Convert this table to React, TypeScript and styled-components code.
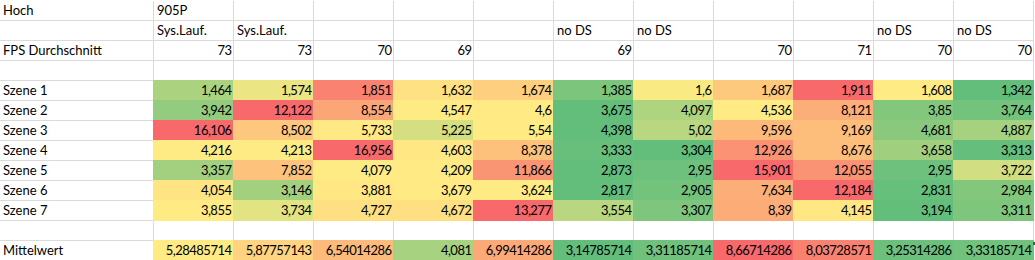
import React from "react";
import styled, { createGlobalStyle } from "styled-components";

const GlobalStyle = createGlobalStyle`
  html, body { margin: 0; padding: 0; background: #ffffff; }
  body { font-family: "Lato", "Liberation Sans", sans-serif; color: #000; }
`;

const GRID = "#dadada";

const Sheet = styled.div`
  position: relative;
  display: grid;
  grid-template-columns: 154px repeat(11, 80px);
  grid-auto-rows: 20px;
  margin-top: 1px;
  width: 1034px;
`;

const Cell = styled.div<{ $numeric?: boolean; $bg?: string }>`
  box-sizing: border-box;
  display: flex;
  align-items: flex-end;
  justify-content: ${(p) => (p.$numeric ? "flex-end" : "flex-start")};
  padding: 0 ${(p) => (p.$numeric ? "1.5px" : "2px")} 2px 3px;
  border-right: 1px solid ${(p) => p.$bg ?? GRID};
  border-bottom: 1px solid ${(p) => p.$bg ?? GRID};
  background: ${(p) => p.$bg ?? "#fff"};
  box-shadow: ${(p) =>
    p.$bg ? `-1px 0 0 0 ${p.$bg}, 0 -1px 0 0 ${p.$bg}, -1px -1px 0 0 ${p.$bg}` : "none"};
  font-size: 13px;
  line-height: 15px;
  letter-spacing: ${(p) => (p.$numeric ? "-0.5px" : "0")};
  white-space: nowrap;
  overflow: visible;
`;

const FillHandle = styled.div`
  position: absolute;
  right: -1px;
  top: 241px;
  width: 2px;
  height: 3px;
  background: #217346;
`;

const MIN = [0x63, 0xbe, 0x7b];
const MID = [0xff, 0xeb, 0x84];
const MAX = [0xf8, 0x69, 0x6b];

const mix = (a: number[], b: number[], t: number) =>
  `rgb(${a.map((v, i) => Math.round(v + (b[i] - v) * t)).join(",")})`;

function scale(values: number[]): string[] {
  const sorted = [...values].sort((x, y) => x - y);
  const n = sorted.length;
  const lo = sorted[0];
  const hi = sorted[n - 1];
  const rank = 0.5 * (n - 1);
  const f = Math.floor(rank);
  const mid = sorted[f] + (sorted[Math.min(f + 1, n - 1)] - sorted[f]) * (rank - f);
  return values.map((v) => {
    if (v <= mid) return mix(MIN, MID, mid === lo ? 1 : (v - lo) / (mid - lo));
    return mix(MID, MAX, hi === mid ? 0 : (v - mid) / (hi - mid));
  });
}

const EMPTY11 = Array(11).fill("");

type Row = { label: string; cells: string[]; colored?: boolean; numeric?: boolean };

const rows: Row[] = [
  { label: "Hoch", cells: ["905P", "", "", "", "", "", "", "", "", "", ""] },
  { label: "", cells: ["Sys.Lauf.", "Sys.Lauf.", "", "", "", "no DS", "no DS", "", "", "no DS", "no DS"] },
  { label: "FPS Durchschnitt", cells: ["73", "73", "70", "69", "", "69", "", "70", "71", "70", "70"], numeric: true },
  { label: "", cells: EMPTY11 },
  { label: "Szene 1", colored: true, numeric: true, cells: ["1,464", "1,574", "1,851", "1,632", "1,674", "1,385", "1,6", "1,687", "1,911", "1,608", "1,342"] },
  { label: "Szene 2", colored: true, numeric: true, cells: ["3,942", "12,122", "8,554", "4,547", "4,6", "3,675", "4,097", "4,536", "8,121", "3,85", "3,764"] },
  { label: "Szene 3", colored: true, numeric: true, cells: ["16,106", "8,502", "5,733", "5,225", "5,54", "4,398", "5,02", "9,596", "9,169", "4,681", "4,887"] },
  { label: "Szene 4", colored: true, numeric: true, cells: ["4,216", "4,213", "16,956", "4,603", "8,378", "3,333", "3,304", "12,926", "8,676", "3,658", "3,313"] },
  { label: "Szene 5", colored: true, numeric: true, cells: ["3,357", "7,852", "4,079", "4,209", "11,866", "2,873", "2,95", "15,901", "12,055", "2,95", "3,722"] },
  { label: "Szene 6", colored: true, numeric: true, cells: ["4,054", "3,146", "3,881", "3,679", "3,624", "2,817", "2,905", "7,634", "12,184", "2,831", "2,984"] },
  { label: "Szene 7", colored: true, numeric: true, cells: ["3,855", "3,734", "4,727", "4,672", "13,277", "3,554", "3,307", "8,39", "4,145", "3,194", "3,311"] },
  { label: "", cells: EMPTY11 },
  { label: "Mittelwert", colored: true, numeric: true, cells: ["5,28485714", "5,87757143", "6,54014286", "4,081", "6,99414286", "3,14785714", "3,31185714", "8,66714286", "8,03728571", "3,25314286", "3,33185714"] },
];

export default function App() {
  return (
    <>
      <GlobalStyle />
      <Sheet>
        {rows.map((row, r) => {
          const colors = row.colored
            ? scale(row.cells.map((c) => parseFloat(c.replace(",", "."))))
            : [];
          return (
            <React.Fragment key={r}>
              <Cell>{row.label}</Cell>
              {row.cells.map((c, i) => (
                <Cell key={i} $numeric={row.numeric} $bg={row.colored ? colors[i] : undefined}>
                  {c}
                </Cell>
              ))}
            </React.Fragment>
          );
        })}
        <FillHandle />
      </Sheet>
    </>
  );
}
